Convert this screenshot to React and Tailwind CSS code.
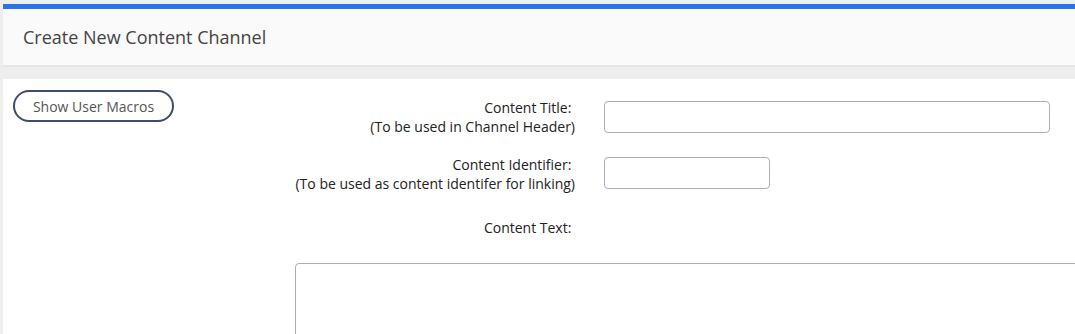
export default function App() {
  return (
    <div
      className="min-h-[334px] bg-[#eeeeee] pt-[4px] pl-[3px] text-[#222]"
      style={{ fontFamily: '"Open Sans", sans-serif' }}
    >
      {/* 헤더 */}
      <div className="h-[5px] bg-[#2673f0]" />
      <div className="flex h-[58px] items-center border-b-2 border-[#e6e6ea] bg-[#fafafa] pl-[20px]">
        <h1 className="text-[18px] text-[#444]">Create New Content Channel</h1>
      </div>

      <div className="mt-[12px] flex bg-white pt-[11px]">
        {/* 왼쪽 버튼 */}
        <div className="w-[292px] shrink-0 pl-[10px]">
          <button className="block h-[32px] w-[161px] rounded-full border-2 border-[#414b6b] text-[14px] text-[#555]">
            Show User Macros
          </button>
        </div>

        {/* 입력 폼 */}
        <div className="flex-1">
          <div className="grid grid-cols-[280px_1fr] gap-x-[29px]">
            <div className="pt-[8px] text-right text-[14px] leading-[19px]">
              Content Title:&nbsp;
              <br />
              (To be used in Channel Header)
            </div>
            <div className="pt-[11px]">
              <input className="h-[32px] w-[446px] rounded-[4px] border border-[#a9aebe]" />
            </div>

            <div className="pt-[19px] text-right text-[14px] leading-[19px]">
              Content Identifier:&nbsp;
              <br />
              (To be used as content identifer for linking)
            </div>
            <div className="pt-[21px]">
              <input className="h-[32px] w-[166px] rounded-[4px] border border-[#a9aebe]" />
            </div>

            <div className="pt-[25px] text-right text-[14px] leading-[19px]">Content Text:&nbsp;</div>
            <div />
          </div>

          <textarea className="mt-[26px] block h-[100px] w-[820px] rounded-tl-[4px] border border-[#a9aebe]" />
        </div>
      </div>
    </div>
  );
}
